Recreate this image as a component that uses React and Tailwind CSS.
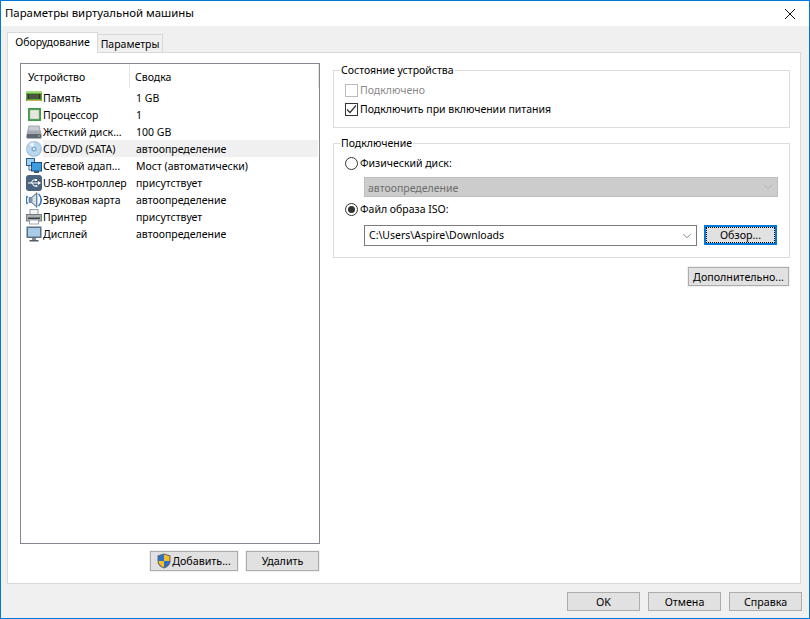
import { ChevronDown } from 'lucide-react';

const font = { fontFamily: '"Noto Sans", "Liberation Sans", sans-serif' };

const MemoryIcon = () => (
    <svg width="16" height="16" viewBox="0 0 16 16">
        <rect x="0" y="1" width="16" height="10" fill="#5aa83c" />
        <rect x="0" y="1" width="16" height="2" fill="#a5dc7a" />
        <rect x="1.5" y="4" width="13" height="5" fill="#2e3328" />
        <path d="M4 4v5M6 4v5M8 4v5M10 4v5M12 4v5" stroke="#7c8a68" strokeWidth="0.8" />
        <rect x="1" y="10" width="14" height="1" fill="#c9b25a" />
    </svg>
);

const CpuIcon = () => (
    <svg width="16" height="16" viewBox="0 0 16 16">
        <rect x="2" y="1" width="13" height="13" fill="#3f9a4a" />
        <rect x="4" y="3" width="9" height="9" fill="#e6e6dc" stroke="#9eb69c" strokeWidth="0.5" />
    </svg>
);

const DiskIcon = () => (
    <svg width="16" height="16" viewBox="0 0 16 16">
        <path d="M2.5 1.5h11l2 8.5H0.5z" fill="#a4a9b2" />
        <path d="M3.5 2.5h9l1 4H2.5z" fill="#c6cad1" />
        <rect x="0.5" y="10" width="15" height="4.5" rx="1" fill="#5f6770" />
        <rect x="12" y="11.5" width="2" height="1" fill="#8de05c" />
    </svg>
);

const CdIcon = () => (
    <svg width="16" height="16" viewBox="0 0 16 16">
        <circle cx="8" cy="8" r="8" fill="#a5c8e6" />
        <circle cx="8" cy="8" r="6.5" fill="#bcd8ee" />
        <path d="M8 8L3 3A7 7 0 0 1 8 1.5z" fill="#e8f3fb" />
        <circle cx="8" cy="8" r="2.6" fill="#86add0" />
        <circle cx="8" cy="8" r="1" fill="#ffffff" />
    </svg>
);

const NetworkIcon = () => (
    <svg width="16" height="16" viewBox="0 0 16 16">
        <rect x="0.5" y="0.5" width="8" height="7" fill="#9fd0f0" stroke="#2a5f8f" />
        <path d="M3 8v4h3" stroke="#2a5f8f" fill="none" />
        <rect x="5.5" y="4.5" width="10" height="8.5" fill="#3d9be0" stroke="#1d4f7c" />
        <rect x="8" y="13" width="5" height="2" fill="#44586b" />
    </svg>
);

const UsbIcon = () => (
    <svg width="16" height="16" viewBox="0 0 16 16">
        <rect x="0" y="0" width="16" height="16" rx="3" fill="#4a6480" />
        <path d="M2 8h11M5 8l2-3h2M6 8l2 3h2" stroke="#ffffff" strokeWidth="1" fill="none" />
        <path d="M12 6l3 2-3 2z" fill="#ffffff" />
        <rect x="9" y="4" width="2" height="2" fill="#ffffff" />
        <circle cx="10.5" cy="11" r="1" fill="#ffffff" />
    </svg>
);

const SoundIcon = () => (
    <svg width="16" height="16" viewBox="0 0 16 16">
        <path d="M1.5 4A7 7 0 0 0 1.5 12" stroke="#2f78c4" strokeWidth="1.6" fill="none" />
        <path d="M12.5 2A8 8 0 0 1 12.5 14" stroke="#2f78c4" strokeWidth="1.6" fill="none" />
        <path d="M3 5.5h2.5L11 0.5v15L5.5 10.5H3z" fill="#7f97ad" stroke="#3c5a78" strokeWidth="0.6" />
        <path d="M6.5 5.5l3.5-3v11l-3.5-3z" fill="#d6e0e9" />
    </svg>
);

const PrinterIcon = () => (
    <svg width="16" height="16" viewBox="0 0 16 16">
        <rect x="4" y="0.5" width="8" height="5" fill="#f4f4f4" stroke="#7e868e" strokeWidth="0.8" />
        <rect x="0.5" y="5.5" width="15" height="6.5" fill="#aab1b8" stroke="#646b73" strokeWidth="0.8" />
        <rect x="2" y="8.5" width="12" height="1.5" fill="#3d4247" />
        <rect x="3.5" y="11" width="9" height="4" fill="#ffffff" stroke="#8a9097" strokeWidth="0.8" />
        <rect x="13.5" y="7" width="1.5" height="1" fill="#6fce4e" />
    </svg>
);

const DisplayIcon = () => (
    <svg width="16" height="16" viewBox="0 0 16 16">
        <rect x="0.5" y="0.5" width="15" height="11.5" fill="#5d7184" />
        <rect x="2" y="2" width="12" height="8.5" fill="#a9cbe6" />
        <rect x="6" y="12" width="4" height="2" fill="#7f8a94" />
        <rect x="3.5" y="14" width="9" height="1.5" fill="#4f5b66" />
    </svg>
);

const ShieldIcon = () => (
    <svg width="14" height="16" viewBox="0 0 14 16">
        <path d="M7 0.5L13.5 2.5V8C13.5 12 10 14.5 7 15.5C4 14.5 0.5 12 0.5 8V2.5Z" fill="#5d6670" />
        <path d="M7 1.5V8H1.5V3.2Z" fill="#2a72c8" />
        <path d="M7 1.5L12.5 3.2V8H7Z" fill="#f6bd2a" />
        <path d="M7 8V14.3C4.5 13.4 1.7 11.2 1.5 8Z" fill="#f6bd2a" />
        <path d="M7 8H12.5C12.3 11.2 9.5 13.4 7 14.3Z" fill="#2a72c8" />
    </svg>
);

const devices = [
    { icon: MemoryIcon, name: 'Память', summary: '1 GB' },
    { icon: CpuIcon, name: 'Процессор', summary: '1' },
    { icon: DiskIcon, name: 'Жесткий диск...', summary: '100 GB' },
    { icon: CdIcon, name: 'CD/DVD (SATA)', summary: 'автоопределение', selected: true },
    { icon: NetworkIcon, name: 'Сетевой адап...', summary: 'Мост (автоматически)' },
    { icon: UsbIcon, name: 'USB-контроллер', summary: 'присутствует' },
    { icon: SoundIcon, name: 'Звуковая карта', summary: 'автоопределение' },
    { icon: PrinterIcon, name: 'Принтер', summary: 'присутствует' },
    { icon: DisplayIcon, name: 'Дисплей', summary: 'автоопределение' },
];

const Button = ({ className = '', children }) => (
    <button className={`flex items-center justify-center bg-[#e1e1e1] border border-[#adadad] shadow-[0_0_0_1px_#f0f0f0] text-[10.7px] text-black ${className}`}>
        {children}
    </button>
);

const Radio = ({ checked }) => (
    <span className="flex items-center justify-center w-[13px] h-[13px] rounded-full border border-[#333333] bg-white">
        {checked && <span className="w-[7px] h-[7px] rounded-full bg-[#333333]"></span>}
    </span>
);

const App = () => {
    return (
        <div style={font} className="w-[810px] h-[619px] flex flex-col border border-[#0078d7] bg-[#f0f0f0] text-[10.5px] leading-[16px] text-black overflow-hidden">
            <div className="h-[25px] shrink-0 bg-white flex items-center justify-between pl-[4px] pr-[13px]">
                <span className="text-[11.4px] pb-[2px]">Параметры виртуальной машины</span>
                <svg width="12" height="12" viewBox="0 0 12 12">
                    <path d="M1 1L11 11M11 1L1 11" stroke="#111111" strokeWidth="1" fill="none" />
                </svg>
            </div>

            <div className="flex items-end h-[26px] shrink-0 pl-[6px]">
                <div className="w-[91px] h-[21px] bg-white border border-b-0 border-[#d9d9d9] flex items-center justify-center -mb-px z-10 pb-[2px]">
                    Оборудование
                </div>
                <div className="w-[65px] h-[18px] bg-[#f0f0f0] border border-l-0 border-b-0 border-[#d9d9d9] flex items-center justify-center">
                    Параметры
                </div>
            </div>

            <div className="w-[794px] h-[532px] ml-[6px] bg-white border border-[#d9d9d9] flex shrink-0 pl-[12px] pt-[10px]">
                <div className="w-[300px] shrink-0">
                    <div className="h-[481px] border border-[#828790] bg-white">
                        <div className="flex h-[24px] items-stretch">
                            <div className="w-[109px] pl-[7px] pt-[5px] border-r border-[#e5e5e5]">Устройство</div>
                            <div className="w-[189px] pl-[5px] pt-[5px] border-r border-[#e5e5e5]">Сводка</div>
                        </div>
                        <div className="pt-[1px]">
                            {devices.map((d) => (
                                <div key={d.name} className="flex items-center h-[17px] pl-[5px]">
                                    <span className="w-[17px] h-[16px] shrink-0"><d.icon /></span>
                                    <div className={`flex flex-1 h-full items-center mr-px ${d.selected ? 'bg-[#f0f0f0]' : ''}`}>
                                        <span className="w-[93px] shrink-0 whitespace-nowrap">{d.name}</span>
                                        <span className="whitespace-nowrap">{d.summary}</span>
                                    </div>
                                </div>
                            ))}
                        </div>
                    </div>
                    <div className="flex justify-end gap-[8px] mt-[7px] pr-[1px]">
                        <Button className="w-[88px] h-[20px] gap-[1px]"><ShieldIcon />Добавить...</Button>
                        <Button className="w-[73px] h-[20px]">Удалить</Button>
                    </div>
                </div>

                <div className="w-[457px] ml-[13px] shrink-0">
                    <fieldset className="h-[65px] border border-[#dcdcdc]">
                        <legend className="ml-[6px] px-[1px] leading-[14px]">Состояние устройства</legend>
                        <div className="pl-[11px]">
                            <div className="flex items-center gap-[2px] h-[16px] mt-[5px] text-[#8a8a8a]">
                                <span className="w-[13px] h-[13px] border border-[#bcbcbc] bg-white"></span>
                                Подключено
                            </div>
                            <div className="flex items-center gap-[2px] h-[16px] mt-[3px]">
                                <span className="w-[13px] h-[13px] border border-[#333333] bg-white flex items-center justify-center">
                                    <svg width="11" height="11" viewBox="0 0 11 11">
                                        <path d="M1 5.5L4 8.5L10 1.5" stroke="#333333" strokeWidth="1.2" fill="none" />
                                    </svg>
                                </span>
                                Подключить при включении питания
                            </div>
                        </div>
                    </fieldset>

                    <fieldset className="h-[122px] mt-[8px] border border-[#dcdcdc]">
                        <legend className="ml-[6px] px-[1px] leading-[14px]">Подключение</legend>
                        <div className="px-[11px]">
                            <div className="flex items-center gap-[2px] h-[16px] mt-[5px]">
                                <Radio />
                                Физический диск:
                            </div>
                            <div className="ml-[19px] mt-[6px] w-[414px] h-[20px] bg-[#cccccc] border border-[#bfbfbf] flex items-center justify-between pl-[3px] pr-[2px] text-[#6d6d6d]">
                                <span className="pt-[1px]">автоопределение</span>
                                <ChevronDown size={14} strokeWidth={1} color="#a0a0a0" />
                            </div>
                            <div className="flex items-center gap-[2px] h-[16px] mt-[4px]">
                                <Radio checked />
                                Файл образа ISO:
                            </div>
                            <div className="flex ml-[19px] mt-[8px]">
                                <div className="w-[333px] h-[21px] bg-white border border-[#7a7a7a] flex items-center justify-between pl-[4px] pr-[2px]">
                                    <span className="pb-[2px]">C:\Users\Aspire\Downloads</span>
                                    <ChevronDown size={14} strokeWidth={1} color="#333333" />
                                </div>
                                <div className="ml-[7px] w-[73px] h-[20px] bg-[#e1e1e1] border-2 border-[#0078d7] flex items-center justify-center">
                                    <span className="w-full h-full border border-dotted border-black flex items-center justify-center text-[10.7px]">Обзор...</span>
                                </div>
                            </div>
                        </div>
                    </fieldset>

                    <div className="flex justify-end mt-[9px] pr-[1px]">
                        <Button className="w-[101px] h-[19px]">Дополнительно...</Button>
                    </div>
                </div>
            </div>

            <div className="flex justify-end gap-[8px] pr-[7px] mt-[8px]">
                <Button className="w-[73px] h-[19px]">OK</Button>
                <Button className="w-[73px] h-[19px]">Отмена</Button>
                <Button className="w-[73px] h-[19px]">Справка</Button>
            </div>
        </div>
    );
};

export default App;
